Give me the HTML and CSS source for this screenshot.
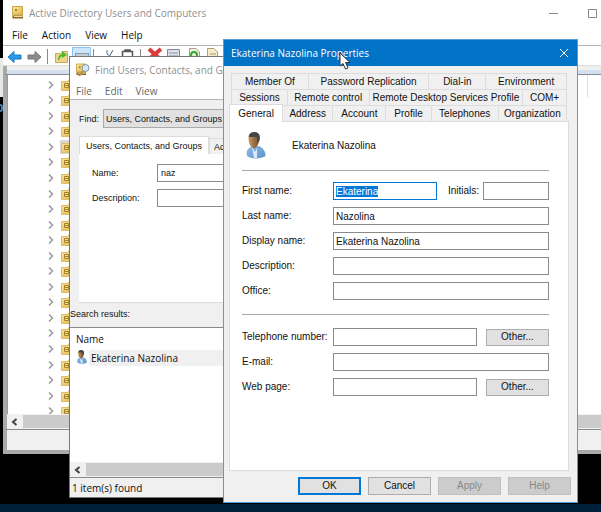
FILE: index.html
```html
<!DOCTYPE html>
<html lang="en">
<head>
<meta charset="utf-8">
<title>Active Directory Users and Computers</title>
<link rel="stylesheet" href="styles.css">
</head>
<body>
<svg class="defs" aria-hidden="true">
  <defs>
    <linearGradient id="gold" x1="0" y1="0" x2="1" y2="1"><stop offset="0" stop-color="#fbeaa6"/><stop offset="1" stop-color="#dfb244"/></linearGradient>
    <linearGradient id="shirt" x1="0" y1="0" x2="1" y2="1"><stop offset="0" stop-color="#8fbce8"/><stop offset="1" stop-color="#5b92cc"/></linearGradient>
    <linearGradient id="skin" x1="0" y1="0" x2="1" y2="0"><stop offset="0" stop-color="#c79a68"/><stop offset="1" stop-color="#6d4728"/></linearGradient>
    <symbol id="chevron" viewBox="0 0 6 8"><path d="M1 .5 4.5 4 1 7.5" fill="none" stroke="#9a9a9a" stroke-width="1.5"/></symbol>
    <symbol id="unit" viewBox="0 0 14 12">
      <path d="M.5 2.5H7L8 .5H13.500V11.500H.5Z" fill="url(#gold)" stroke="#dcbc68"/>
      <path d="M3.500 4.500H7.500V8.500H3.500Z" fill="#f6dc84" stroke="#a5832a"/>
      <path d="M4 6.500H7" stroke="#a5832a"/>
    </symbol>
    <symbol id="book" viewBox="0 0 12 13">
      <path d="M.5.5H10.500V9H.5Z" fill="url(#gold)" stroke="#c9a545"/>
      <path d="M.5 9.500H11V12.500H.5Z" fill="#8c6a12"/><path d="M2 10.500H10.500" stroke="#eee0b0"/>
      <path d="M3 3H5V5H3Z" fill="#a98320"/>
    </symbol>
    <symbol id="person" viewBox="0 0 20 27">
      <path d="M1 24C0 18 2 15.500 7 14.500L13 14C17 16 19.500 19 19.500 24 15 27 5 27.500 1 24Z" fill="url(#shirt)"/>
      <path d="M6 15 9 20 11 16 11 26H8Z" fill="#dceafa"/>
      <path d="M2.500 6C2 1 6 0 8.500.5 13 .5 14 4 13 9 12.500 13 10 16 8 16.500 4 15 2.500 11 2.500 6Z" fill="url(#skin)"/>
      <path d="M3 5C3 1 6 0 9 0 13.500.5 15 4 13 10L11.500 9 11 5Z" fill="#454545"/>
    </symbol>
  </defs>
</svg>

<main class="desktop">
  <div class="backdrop" aria-hidden="true"><i class="sliver"></i><i class="badge"></i></div>

  <section class="win console">
    <header class="titlebar">
      <svg class="book"><use href="#book"/></svg>
      <h1>Active Directory Users and Computers</h1>
      <svg class="caption" viewBox="0 0 50 12"><path d="M0 6.500H9M39.500 2.500H47.500V10.500H39.500Z" fill="none" stroke="#888"/></svg>
    </header>
    <nav class="menu">
      <button>File</button><button>Action</button><button>View</button><button>Help</button>
    </nav>
    <div class="tools">
      <svg class="toolicons" viewBox="0 0 220 20">
        <path d="M1 11 7 5.500V9H14V13H7V16.500Z" fill="#2b9be8" stroke="#1879c4"/>
        <path d="M34 11 28 5.500V9H21V13H28V16.500Z" fill="#8c8c8c" stroke="#777"/>
        <path d="M40.500 3V18M86.500 3V18M133.500 3V18" stroke="#888"/>
        <path d="M48.500 7.500H53L55 5.500H60.500V16.500H48.500Z" fill="#f0d48b" stroke="#c9a95a"/>
        <path d="M51 14Q51 9 55 8V5L60 9 55 12V10Q53 11 52 14Z" fill="#4cb82c"/>
        <path d="M65.500 1.500H83.500V19H65.500Z" fill="#cbe5fb" stroke="#8cc3f0"/>
        <path d="M68 7H82V18H68Z" fill="#8c9aab"/><path d="M69 9H81" stroke="#fff"/>
        <path d="M106 4 102 11M100 4V8L103 10" stroke="#55708f" fill="none"/>
        <path d="M115.500 10V5.500H125.500V10M118 5.500V4H123V5.500" stroke="#555" fill="none" stroke-width="1.500"/>
        <path d="M142 3 153 13M154 3 142 13" stroke="#db3b3b" stroke-width="4"/>
        <path d="M160.500 3.500H172.500V14H160.500Z" fill="#dce0e8" stroke="#808898"/><path d="M162 7H171M162 10H171" stroke="#8b93a3"/>
        <path d="M182.500 2.500H189L192.500 6V14H182.500Z" fill="#f5f0dc" stroke="#a5a08e"/><circle cx="187" cy="9" r="3" fill="none" stroke="#35aa35" stroke-width="2"/>
        <path d="M200.500 2.500H207L210.500 6V14H200.500Z" fill="#f7edc5" stroke="#aaa080"/><path d="M203 8H209" stroke="#999"/>
      </svg>
    </div>
    <div class="band"></div>
    <div class="client">
      <div class="tree" id="tree"></div>
      <div class="hscroll"><svg viewBox="0 0 8 8"><path d="M5.500 1 2 4 5.500 7" fill="none" stroke="#444" stroke-width="2"/></svg><i></i></div>
      <i class="colmark"></i>
    </div>
    <footer class="consolestatus"></footer>
  </section>

  <section class="win find">
    <header class="titlebar">
      <svg class="finder" viewBox="0 0 14 14"><use href="#book" width="11" height="13"/><circle cx="9.500" cy="5" r="3.500" fill="#d5e9f5" stroke="#7d97a8"/><path d="M7 8 3 13" stroke="#b79340" stroke-width="2"/></svg>
      <h2>Find Users, Contacts, and Groups</h2>
    </header>
    <nav class="menu">
      <button>File</button><button>Edit</button><button>View</button>
    </nav>
    <div class="query">
      <div class="scope"><label for="scope">Find:</label><select id="scope"><option>Users, Contacts, and Groups</option></select></div>
      <div class="tabs"><button class="on">Users, Contacts, and Groups</button><button>Advanced</button></div>
      <div class="panel">
        <label for="qname">Name:</label><input id="qname" value="naz">
        <label for="qdesc">Description:</label><input id="qdesc">
      </div>
      <p>Search results:</p>
    </div>
    <div class="results">
      <table>
        <thead><tr><th>Name</th></tr></thead>
        <tbody><tr><td><div><svg><use href="#person"/></svg><span>Ekaterina Nazolina</span></div></td></tr></tbody>
      </table>
      <div class="hscroll"><svg viewBox="0 0 8 8"><path d="M5.500 1 2 4 5.500 7" fill="none" stroke="#444" stroke-width="2"/></svg><i></i></div>
    </div>
    <footer>1 item(s) found</footer>
  </section>

  <section class="win dialog">
    <header class="titlebar">
      <h2>Ekaterina Nazolina Properties</h2>
      <button aria-label="Close"><svg viewBox="0 0 10 10"><path d="M1 1 9 9M9 1 1 9" stroke="#fff" fill="none"/></svg></button>
    </header>
    <div class="body">
      <div class="tabrows">
        <div class="r1"><button>Member Of</button><button>Password Replication</button><button>Dial-in</button><button>Environment</button></div>
        <div class="r2"><button>Sessions</button><button>Remote control</button><button>Remote Desktop Services Profile</button><button>COM+</button></div>
        <div class="r3"><button class="on">General</button><button>Address</button><button>Account</button><button>Profile</button><button>Telephones</button><button>Organization</button></div>
      </div>
      <form class="sheet">
        <div class="who"><svg><use href="#person"/></svg><span>Ekaterina Nazolina</span></div>
        <div class="fields">
          <label for="first">First name:</label><div class="pair"><input id="first" value="Ekaterina"><label for="ini">Initials:</label><input id="ini" class="short"></div>
          <label for="last">Last name:</label><input id="last" value="Nazolina">
          <label for="disp">Display name:</label><input id="disp" value="Ekaterina Nazolina">
          <label for="desc">Description:</label><input id="desc">
          <label for="office">Office:</label><input id="office">
        </div>
        <div class="fields contact">
          <label for="tel">Telephone number:</label><div class="pair"><input id="tel"><button type="button">Other...</button></div>
          <label for="mail">E-mail:</label><input id="mail">
          <label for="web">Web page:</label><div class="pair"><input id="web"><button type="button">Other...</button></div>
        </div>
      </form>
      <div class="actions"><button class="default">OK</button><button>Cancel</button><button disabled>Apply</button><button disabled>Help</button></div>
    </div>
    <svg class="pointer" viewBox="0 0 12 18"><path d="M1 1V14L4 11.500 6.500 17 9 16 6.500 10.500H11Z" fill="#fff" stroke="#333"/></svg>
  </section>
  <div class="taskbar"></div>
</main>
<script src="app.js"></script>
</body>
</html>
```
FILE: styles.css
```css
* { box-sizing: border-box; }
body { margin: 0; background: #000; color: #111; font: 10px/14px "Liberation Sans", sans-serif; overflow: hidden; }
button, input, select { font: inherit; color: inherit; border-radius: 0; margin: 0; }
button { padding: 0; border: 0; background: none; white-space: nowrap; }
h1, h2, p { margin: 0; font-weight: 400; font-size: inherit; white-space: nowrap; }
svg { display: block; flex: none; }
.defs { position: absolute; width: 0; height: 0; }

.desktop { position: relative; min-height: 100vh; overflow: hidden; }
.backdrop { position: absolute; top: 58px; left: 0; }
.sliver { display: block; width: 3px; height: 39px; background: #e6e8e3; }
.badge { display: block; width: 3px; height: 8px; margin-top: 7px; border: 2px solid #3f83b5; border-left: 0; border-radius: 0 4px 4px 0; }
.taskbar { position: absolute; left: 0; right: 0; bottom: 0; height: 8px; background: #00203a; }

.win { position: absolute; display: flex; flex-direction: column; background: #fff; }
.titlebar, .menu, .results, .find footer { font: 10px/16px "Open Sans", sans-serif; }
.titlebar { display: flex; align-items: center; color: #8f8f8f; }
.menu { display: flex; }

.console { left: 3px; right: 0; top: 0; bottom: 58px; }
.console .titlebar { height: 25px; padding-left: 9px; gap: 5px; }
.book { width: 12px; height: 13px; }
.caption { width: 50px; height: 12px; margin-left: auto; margin-right: 2px; }
.console .menu { height: 21px; padding: 2px 9px; gap: 14px; border-bottom: 1px solid #b5b5b5; }
.tools { height: 20px; padding-left: 4px; border-bottom: 1px solid #ddd; overflow: hidden; }
.toolicons { width: 220px; height: 20px; }
.band { height: 8px; background: linear-gradient(#f0f0f0 50%, #d5e0ee 50%); border-left: 4px solid #a9a9a9; }
.client { position: relative; flex: 1; min-height: 0; display: flex; flex-direction: column; border-left: 4px solid #a9a9a9; border-top: 1px solid #868a92; border-bottom: 1px solid #868a92; }
.tree { flex: 1; min-height: 0; overflow: hidden; display: grid; grid-template-rows: repeat(22, 1fr); align-content: start; padding-top: 2px; margin-bottom: -5px; border-left: 1px solid #999; }
.tree div { display: flex; align-items: center; gap: 6px; padding-left: 40px; min-height: 0; }
.tree .chev { width: 6px; height: 8px; }
.tree span { padding: 1px; }
.tree .sel span { background: #d9d9d9; }
.tree .ou { width: 14px; height: 12px; }
.hscroll { position: relative; height: 15px; display: flex; align-items: center; background: #f0f0f0; padding-left: 4px; gap: 4px; }
.hscroll svg { width: 8px; height: 8px; }
.hscroll i { flex: 1; height: 13px; background: #cbcbcb; }
.colmark { position: absolute; right: 13px; top: 0; height: 22px; border-left: 1px solid #ddd; }
.consolestatus { height: 24px; background: #f0f0f0; border-left: 4px solid #a9a9a9; border-bottom: 4px solid #a9a9a9; }

.find { left: 69px; top: 56px; bottom: 14px; width: 400px; border: 1px solid #777; }
.find .titlebar { height: 25px; padding-left: 6px; gap: 5px; }
.finder { width: 14px; height: 14px; }
.find .menu { height: 18px; padding-left: 6px; gap: 13px; border-bottom: 1px solid #b5b5b5; color: #666; }
.query { background: #f0f0f0; padding: 9px 0 6px 9px; font-size: 9px; }
.scope { display: flex; align-items: center; }
.scope label { width: 24px; }
.scope select { appearance: none; flex: 1; height: 19px; padding: 0 2px; border: 1px solid #aaa; background: #e1e1e1; }
.tabs { display: flex; align-items: flex-end; margin-top: 8px; }
.tabs button { height: 16px; padding: 0 4px; border: 1px solid #dcdcdc; border-bottom: 0; }
.tabs .on { height: 18px; padding: 0 6px; background: #fff; }
.query .panel { height: 149px; padding: 10px 13px; background: #fff; border-bottom: 1px solid #dcdcdc; display: grid; grid-template-columns: 58px 1fr; column-gap: 7px; row-gap: 7px; align-content: start; align-items: center; }
input { width: 100%; min-width: 0; height: 18px; padding: 0 2px; border: 1px solid #8a8a8a; background: #fff; outline: 0; }
.query input { padding: 0 3px; }
.query p { margin: 4px 0 0 -9px; }
.results { flex: 1; display: flex; flex-direction: column; border-top: 1px solid #868a92; border-bottom: 1px solid #868a92; }
.results table { width: 100%; border-spacing: 0; }
.results th { padding: 3px 6px; text-align: left; font-weight: 400; }
.results td { padding: 0 0 0 6px; }
.results td div { display: flex; gap: 1px; }
.results td svg { width: 12px; height: 14px; }
.results td span { flex: 1; padding-left: 2px; background: #f0f0f0; }
.results .hscroll { margin-top: auto; }
.find footer { height: 19px; padding: 2px; background: #f0f0f0; }

.dialog { left: 223px; top: 39px; width: 355px; border: 1px solid #4f9fd8; }
.dialog .titlebar { height: 26px; padding: 0 8px 0 7px; justify-content: space-between; background: #0173c7; color: #fff; }
.dialog .titlebar svg { width: 10px; height: 10px; }
.body { padding: 7px 8px 7px 5px; background: #f0f0f0; }
.tabrows { padding: 0 2px; }
.tabrows div { display: grid; height: 16px; border-left: 1px solid #dcdcdc; }
.tabrows button { border: 1px solid #dcdcdc; border-left: 0; border-bottom: 0; }
.r1 { grid-template-columns: 77fr 121fr 57fr 81fr; }
.r2 { grid-template-columns: 56fr 82fr 154fr 44fr; }
.tabrows .r3 { grid-template-columns: 54fr 50fr 53fr 45fr 67fr 68fr; border-left: 0; margin-left: -2px; }
.tabrows .on { position: relative; margin-top: -1px; margin-bottom: -1px; background: #fff; border-left: 1px solid #dcdcdc; }
.sheet { display: block; padding: 10px 19px 60px 12px; background: #fff; border: 1px solid #dcdcdc; }
.who { display: flex; align-items: center; gap: 26px; padding: 0 4px 11px; }
.who svg { width: 20px; height: 27px; }
.fields { display: grid; grid-template-columns: 84px minmax(0, 1fr); column-gap: 7px; row-gap: 7px; align-items: center; padding: 11px 0 14px; border-top: 1px solid #a8a8a8; }
.fields.contact { padding-top: 13px; }
.fields label { white-space: nowrap; }
.pair { display: flex; align-items: center; gap: 9px; }
.pair input { flex: 1; }
.pair label { width: 26px; margin-left: 2px; }
.pair .short { flex: none; width: 66px; }
.pair button, .actions button { width: 63px; height: 17px; background: #e1e1e1; border: 1px solid #adadad; }
#first { border-color: #0078d7; caret-color: transparent; }
#first::selection { background: #0078d7; color: #fff; }
.actions { display: flex; justify-content: flex-end; gap: 7px; padding-top: 6px; margin-right: -2px; }
.actions button { height: 18px; }
.actions .default { border: 2px solid #0078d7; }
.actions button:disabled { background: #ccc; border-color: #bfbfbf; color: #888; }
.pointer { position: absolute; left: 115px; top: 12px; width: 12px; height: 18px; }
```
FILE: app.js
```js
const tree = document.getElementById("tree");
for (let i = 0; i < 22; i++) {
  const row = document.createElement("div");
  if (i === 4) row.className = "sel";
  row.innerHTML = '<svg class="chev"><use href="#chevron"/></svg><span><svg class="ou"><use href="#unit"/></svg></span>';
  tree.append(row);
}
const first = document.getElementById("first");
first.focus();
first.select();
```
